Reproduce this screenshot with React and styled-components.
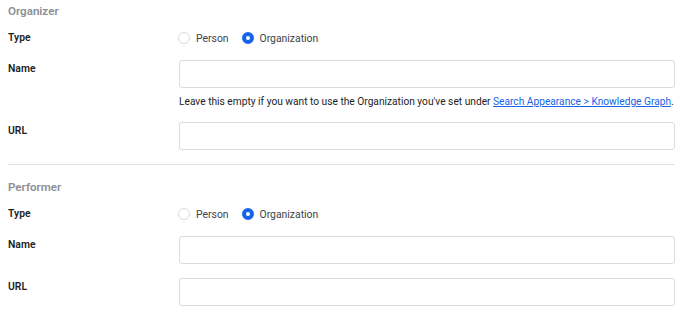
import React, {useState} from 'react'
import styled, {createGlobalStyle} from 'styled-components'

const Global = createGlobalStyle`
	body {
		margin: 0;
		background: #fff;
		font-family: Roboto, "Noto Sans", sans-serif;
		font-size: 10.4px;
		color: #3c434a;
	}
`

const Page = styled.div`
	padding: 3px 5px 0 8px;
`

const Heading = styled.div`
	font-size: 11.6px;
	font-weight: 600;
	line-height: 16px;
	color: #8c8f94;
	margin-top: ${p => p.$top || 0}px;
`

const Row = styled.div`
	display: grid;
	grid-template-columns: 171px minmax(0, 1fr);
	margin-top: ${p => p.$top || 0}px;
`

const Label = styled.div`
	font-weight: 600;
	color: #1e1e1e;
	line-height: 16px;
	padding-top: ${p => p.$pad || 1}px;
`

const Field = styled.div`
	display: flex;
	flex-direction: column;
	min-width: 0;
`

const RadioGroup = styled.div`
	display: flex;
	align-items: center;
	gap: 14px;
	height: 20px;
`

const Option = styled.label`
	display: flex;
	align-items: center;
	gap: 6px;
	cursor: pointer;
	color: #3c434a;
`

const Dot = styled.span`
	box-sizing: border-box;
	width: 12px;
	height: 12px;
	border-radius: 50%;
	border: ${p => p.$on ? '4px solid #1764e8' : '1px solid #d7d9dc'};
	background: #fff;
	margin-left: -1px;
`

const Input = styled.input`
	box-sizing: border-box;
	width: 100%;
	height: 28px;
	border: 1px solid #dcdcde;
	border-radius: 3px;
	padding: 0 8px;
	font: inherit;
	outline: none;
`

const Help = styled.p`
	margin: 6px 0 0;
	font-size: 10.2px;
	line-height: 16px;
	color: #1e1e1e;
	white-space: nowrap;
	a { color: #1764e8; }
`

const Divider = styled.hr`
	border: 0;
	border-top: 1px solid #e3e3e5;
	margin: 14px 0 0;
`

function TypeRow({value, onChange, top}) {
	return (
		<Row $top={top}>
			<Label $pad={2}>Type</Label>
			<RadioGroup>
				{['Person', 'Organization'].map(o =>
					<Option key={o} onClick={() => onChange(o)}>
						<Dot $on={value === o}/>{o}
					</Option>
				)}
			</RadioGroup>
		</Row>
	)
}

function Section({title, top, help}) {
	const [type, setType] = useState('Organization')
	return (
		<>
			<Heading $top={top}>{title}</Heading>
			<TypeRow value={type} onChange={setType} top={9}/>
			<Row $top={12}>
				<Label>Name</Label>
				<Field>
					<Input type="text"/>
					{help &&
						<Help>Leave this empty if you want to use the Organization you've set under <a href="#">Search Appearance &gt; Knowledge Graph</a>.</Help>}
				</Field>
			</Row>
			<Row $top={help ? 12 : 14}>
				<Label>URL</Label>
				<Input type="text"/>
			</Row>
		</>
	)
}

export default function App() {
	return (
		<Page>
			<Global/>
			<Section title="Organizer" help/>
			<Divider/>
			<Section title="Performer" top={14}/>
		</Page>
	)
}
